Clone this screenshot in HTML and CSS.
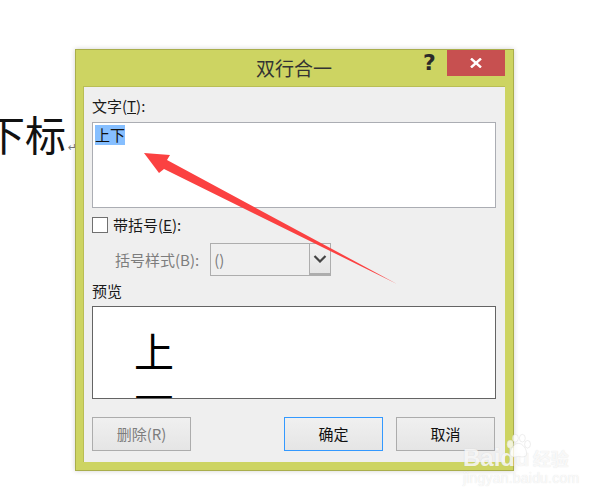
FILE: index.html
```html
<!DOCTYPE html>
<html lang="zh">
<head>
<meta charset="utf-8">
<title>双行合一</title>
<link rel="stylesheet" href="styles.css">
</head>
<body>
<div class="doc-text">下标<span class="para-mark">↵</span></div>
<div class="dialog">
  <div class="titlebar">
    <div class="title">双行合一</div>
    <div class="help">?</div>
    <div class="close">
      <svg width="12" height="10" viewBox="0 0 12 10"><path d="M1 0.5 L11 9.5 M11 0.5 L1 9.5" stroke="#fff" stroke-width="2.4" fill="none"/></svg>
    </div>
  </div>
  <div class="client">
    <div class="label label-text">文字(<u>T</u>):</div>
    <div class="textbox"><span class="selected">上下</span></div>
    <div class="check-row">
      <span class="checkbox"></span>
      <span class="label">带括号(<u>E</u>):</span>
    </div>
    <div class="combo-row">
      <span class="label disabled">括号样式(B):</span>
      <div class="combo">
        <span class="combo-value">()</span>
        <span class="combo-btn">
          <svg width="14" height="8" viewBox="0 0 14 8"><path d="M1.5 1 L7 6.5 L12.5 1" stroke="#444" stroke-width="2.2" fill="none"/></svg>
        </span>
      </div>
    </div>
    <div class="label label-preview">预览</div>
    <div class="preview"><div class="preview-text">上<br>下</div></div>
    <div class="buttons">
      <div class="btn btn-disabled">删除(R)</div>
      <div class="spacer"></div>
      <div class="btn btn-default">确定</div>
      <div class="btn">取消</div>
    </div>
  </div>
</div>
<svg class="arrow" width="604" height="498" viewBox="0 0 604 498">
  <polygon points="144,153 170,155 167,160 397,284 164,169 159,173" fill="#fb4141"/>
</svg>
<div class="watermark">
  <svg class="paw" width="26" height="26" viewBox="0 0 30 28">
    <g fill="#fff" fill-opacity=".75" stroke="#dcdcdc" stroke-opacity=".7" stroke-width=".8">
      <ellipse cx="6" cy="12" rx="3.6" ry="4.6"/>
      <ellipse cx="12" cy="5" rx="3.4" ry="4.4"/>
      <ellipse cx="20" cy="5" rx="3.4" ry="4.4"/>
      <ellipse cx="26" cy="12" rx="3.4" ry="4.4"/>
      <path d="M15.5 11 C21 11 25 18 25 23 C25 27 20 27 15.5 26 C11 27 6 27 6 23 C6 18 10 11 15.5 11 Z"/>
    </g>
  </svg>
  <div class="wm-main"><span>Baidu</span><span class="wm-cn">经验</span></div>
  <div class="wm-sub">jingyan.baidu.com</div>
</div>
</body>
</html>
```
FILE: styles.css
```css
* { box-sizing: border-box; }
html, body { margin: 0; padding: 0; }
body {
  width: 604px;
  height: 498px;
  overflow: hidden;
  background: #fff;
  position: relative;
  padding: 49px 0 0 75px;
  font-family: "Noto Sans CJK SC", "Liberation Sans", sans-serif;
  color: #111;
}
.doc-text {
  position: absolute;
  left: -16px;
  top: 108px;
  font-size: 41px;
  line-height: 50px;
  color: #111;
  white-space: nowrap;
}
.para-mark { font-size: 11px; color: #777; font-family: "DejaVu Sans", sans-serif; margin-left: 2px; }
.dialog {
  position: relative;
  width: 439px;
  height: 422px;
  background: #cdd462;
  border: 1px solid #a9ae4c;
  box-shadow: 0 0 5px rgba(0,0,0,.18);
  padding: 0 8px 8px 7px;
  display: flex;
  flex-direction: column;
}
.titlebar {
  height: 36px;
  flex: none;
  display: flex;
  position: relative;
}
.title {
  flex: 1;
  text-align: center;
  font-size: 19px;
  line-height: 36px;
  color: #333;
}
.help {
  position: absolute;
  left: 340px;
  top: 0;
  font-family: "DejaVu Sans", sans-serif;
  font-weight: 700;
  font-size: 22px;
  line-height: 26px;
  color: #2a2a2a;
}
.close {
  position: absolute;
  left: 364px;
  top: 0;
  width: 58px;
  height: 26px;
  background: #c75050;
  display: flex;
  align-items: center;
  justify-content: center;
}
.client {
  flex: 1;
  background: #efefef;
  border: 1px solid #b9be55;
  border-width: 1px 0 0 1px;
  padding: 0 8px 0 8px;
  display: flex;
  flex-direction: column;
}
.label { font-size: 15px; line-height: 18px; color: #1a1a1a; }
.label-text { margin-top: 10px; }
.textbox {
  margin-top: 7px;
  width: 404px;
  height: 86px;
  background: #fff;
  border: 1px solid #abadb3;
  padding: 2px;
  font-size: 15px;
  line-height: 20px;
  flex: none;
}
.selected { background: #86bfff; display: inline-block; width: 30px; height: 20px; color: #111; }
.check-row { display: flex; align-items: center; margin-top: 9px; height: 16px; gap: 5px; }
.checkbox { width: 16px; height: 16px; background: #fff; border: 1px solid #707070; flex: none; }
.combo-row { display: flex; align-items: center; margin-top: 10px; height: 33px; padding-left: 23px; }
.disabled { color: #7d7d7d; }
.combo {
  margin-left: 11px;
  width: 121px;
  height: 33px;
  border: 1px solid #adadad;
  display: flex;
  background: #efefef;
}
.combo-value { flex: 1; font-size: 15px; line-height: 31px; color: #7d7d7d; padding-left: 3px; }
.combo-btn {
  width: 21px;
  border-left: 1px solid #adadad;
  border-bottom: 2px solid #adadad;
  background: linear-gradient(#f2f2f2, #e5e5e5);
  display: flex;
  align-items: center;
  justify-content: center;
}
.label-preview { margin-top: 6px; }
.preview {
  margin-top: 6px;
  width: 404px;
  height: 93px;
  background: #fff;
  border: 1px solid #646464;
  overflow: hidden;
  flex: none;
}
.preview-text {
  margin: 13px 0 0 41px;
  font-size: 40px;
  line-height: 60px;
  color: #000;
}
.buttons { display: flex; margin-top: 18px; width: 403px; gap: 13px; }
.spacer { flex: 1; }
.btn {
  width: 99px;
  height: 34px;
  border: 1px solid #acacac;
  background: linear-gradient(#f0f0f0, #e5e5e5);
  text-align: center;
  font-size: 15px;
  line-height: 32px;
  color: #111;
}
.btn-disabled { color: #7d7d7d; }
.btn-default { border-color: #3399ff; }
.arrow { position: absolute; left: 0; top: 0; }
.watermark {
  position: absolute;
  left: 463px;
  top: 431px;
  color: rgba(255,255,255,.8);
  text-shadow: 0 0 1px rgba(170,170,170,.4);
  font-family: "Liberation Sans", "Noto Sans CJK SC", sans-serif;
}
.paw { position: absolute; left: 42px; top: 2px; }
.wm-main { margin-top: 14px; font-size: 24px; line-height: 26px; font-weight: 700; white-space: nowrap; }
.wm-cn { font-size: 18px; margin-left: 3px; font-family: "Noto Sans CJK SC", sans-serif; }
.wm-sub { font-size: 14px; line-height: 15px; letter-spacing: .2px; white-space: nowrap; }
```
